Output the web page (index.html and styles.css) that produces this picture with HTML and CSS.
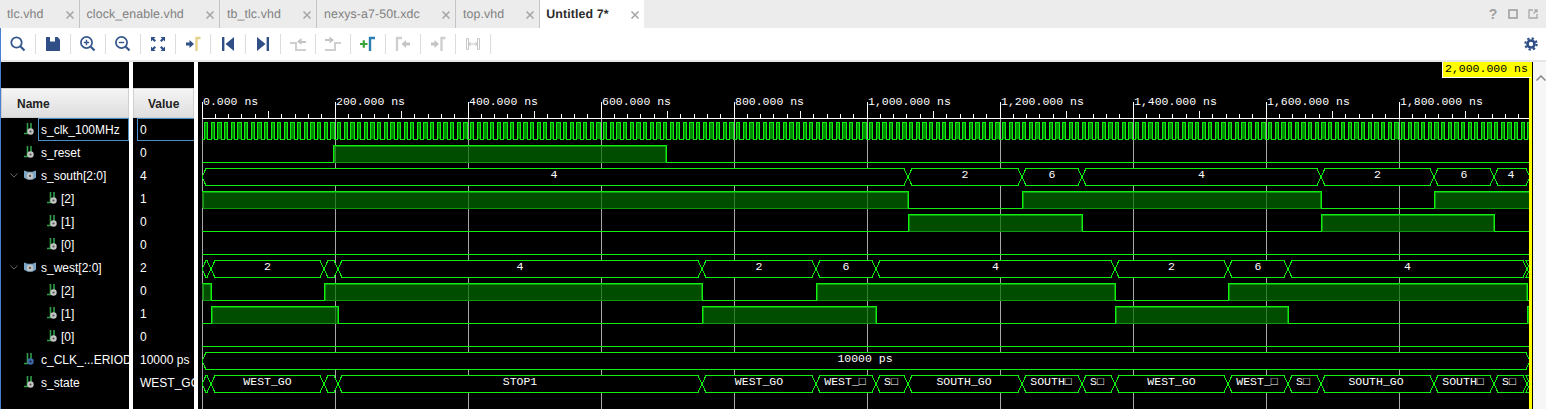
FILE: index.html
```html
<!DOCTYPE html>
<html lang="en">
<head>
  <meta charset="UTF-8">
  <title>Untitled 7</title>
  <link rel="stylesheet" href="styles.css">
</head>
<body>
  <svg class="defs" width="0" height="0">
    <symbol id="bit" viewBox="0 0 12 15">
      <path d="M0 11.500h3.500V1M7 1v6" fill="none" stroke="#2f9e4a" stroke-width="1.600"/>
      <circle cx="6.500" cy="9.500" r="3.200" fill="#c4c4c4"/>
      <circle cx="6.500" cy="9.500" r="1.100" fill="#555"/>
    </symbol>
    <symbol id="const" viewBox="0 0 12 15">
      <path d="M0 11.500h3.500V1M7 1v6" fill="none" stroke="#2f9e4a" stroke-width="1.600"/>
      <circle cx="6.500" cy="9.500" r="3.200" fill="#3f6aa8"/>
      <circle cx="6.500" cy="9.500" r="1.100" fill="#16233f"/>
    </symbol>
    <symbol id="bus" viewBox="0 0 13 13">
      <path d="M0 1l4 1.500h5l4-1.500v8l-4 2h-5l-4-2z" fill="#7ba6c4"/>
      <circle cx="6.500" cy="7" r="3.500" fill="#c4c4c4"/>
      <circle cx="6.500" cy="7" r="1.200" fill="#555"/>
    </symbol>
    <symbol id="close" viewBox="0 0 8 8">
      <path d="M.5.500l7 7M7.500.500l-7 7" stroke="#a4a4a4" stroke-width="1.500" fill="none"/>
    </symbol>
  </svg>

  <div class="app">
    <div class="tabbar">
      <div class="tab"><span>tlc.vhd</span><svg class="close"><use href="#close"/></svg></div>
      <div class="tab"><span>clock_enable.vhd</span><svg class="close"><use href="#close"/></svg></div>
      <div class="tab"><span>tb_tlc.vhd</span><svg class="close"><use href="#close"/></svg></div>
      <div class="tab"><span>nexys-a7-50t.xdc</span><svg class="close"><use href="#close"/></svg></div>
      <div class="tab"><span>top.vhd</span><svg class="close"><use href="#close"/></svg></div>
      <div class="tab active"><span>Untitled 7*</span><svg class="close"><use href="#close"/></svg></div>
      <div class="tab-actions">
        <span class="help">?</span>
        <svg width="10" height="10" viewBox="0 0 10 10"><rect x="1" y="1" width="8" height="8" fill="none" stroke="#a0a0a0" stroke-width="1.600"/></svg>
        <svg width="10" height="10" viewBox="0 0 10 10"><path d="M5 1H1v8h8V5M5.500 4.500L9 1M6.500 1H9v2.500" fill="none" stroke="#a8a8a8" stroke-width="1.300"/></svg>
      </div>
    </div>

    <div class="toolbar">
      <div class="tool"><svg viewBox="0 0 18 18"><circle cx="7.500" cy="7.500" r="5.200" fill="none" stroke="#35578c" stroke-width="1.800"/><path d="M11.500 11.500l4 4" stroke="#35578c" stroke-width="2.200"/></svg></div>
      <div class="tool"><svg viewBox="0 0 18 18"><path d="M2 2h11.500L16 4.500V16H2z" fill="#2f4f86"/><rect x="6" y="2" width="5" height="4.500" fill="#fff"/></svg></div>
      <div class="tool"><svg viewBox="0 0 18 18"><circle cx="7.500" cy="7.500" r="5.600" fill="none" stroke="#35578c" stroke-width="1.700"/><path d="M4.800 7.500h5.400M7.500 4.800v5.400" stroke="#35578c" stroke-width="1.400"/><path d="M11.800 11.800l3.700 3.700" stroke="#35578c" stroke-width="2.200"/></svg></div>
      <div class="tool"><svg viewBox="0 0 18 18"><circle cx="7.500" cy="7.500" r="5.600" fill="none" stroke="#35578c" stroke-width="1.700"/><path d="M4.800 7.500h5.400" stroke="#35578c" stroke-width="1.400"/><path d="M11.800 11.800l3.700 3.700" stroke="#35578c" stroke-width="2.200"/></svg></div>
      <div class="tool"><svg viewBox="0 0 18 18"><path d="M2 2h4.500L5 3.500 7 5.500 5.500 7l-2-2L2 6.500zM16 2v4.500L14.500 5l-2 2L11 5.500l2-2L11.500 2zM2 16v-4.500L3.500 13l2-2L7 12.500l-2 2L6.500 16zM16 16h-4.500L13 14.500l-2-2 1.500-1.500 2 2 1.500-1.500z" fill="#2f4f86"/></svg></div>
      <div class="tool"><svg viewBox="0 0 18 18"><path d="M2 7.500h3.500V5L10 9l-4.500 4v-2.500H2z" fill="#2f4f86"/><path d="M12.500 16V3h4" fill="none" stroke="#e6d28c" stroke-width="2.400"/></svg></div>
      <div class="tool"><svg viewBox="0 0 18 18"><path d="M3 2h2.400v14H3zM15 2v14L6.500 9z" fill="#2f4f86"/></svg></div>
      <div class="tool"><svg viewBox="0 0 18 18"><path d="M12.600 2H15v14h-2.400zM3 2v14l8.500-7z" fill="#2f4f86"/></svg></div>
      <div class="tool"><svg viewBox="0 0 18 18"><path d="M1 8h6v7h10" fill="none" stroke="#cfcfcf" stroke-width="2"/><path d="M17 6h-4.500V3L8 6.500l4.500 3.500V8H17z" fill="#c4c4c4"/></svg></div>
      <div class="tool"><svg viewBox="0 0 18 18"><path d="M1 15h10V8h6" fill="none" stroke="#cfcfcf" stroke-width="2"/><path d="M1 4h4.500V1.500L10 5l-4.500 3.500V6H1z" fill="#c4c4c4"/></svg></div>
      <div class="tool"><svg viewBox="0 0 18 18"><path d="M1 9h7.500M4.800 5.200v7.600" stroke="#3aa53a" stroke-width="2.200"/><path d="M11 16V3h5" fill="none" stroke="#2b7fb0" stroke-width="2.400"/></svg></div>
      <div class="tool"><svg viewBox="0 0 18 18"><path d="M3 16V3h5" fill="none" stroke="#cfcfcf" stroke-width="2.400"/><path d="M16 7.500h-4V5L7.500 9l4.500 4v-2.500h4z" fill="#c4c4c4"/></svg></div>
      <div class="tool"><svg viewBox="0 0 18 18"><path d="M2 7.500h3.500V5L10 9l-4.500 4v-2.500H2z" fill="#c4c4c4"/><path d="M12.500 16V3h4" fill="none" stroke="#cfcfcf" stroke-width="2.400"/></svg></div>
      <div class="tool"><svg viewBox="0 0 18 18"><path d="M2.500 3.500h2v11h-2zM13.500 3.500h2v11h-2z" fill="#fff" stroke="#c8c8c8"/><path d="M5 9h8M6.500 7L5 9l1.500 2M11.500 7L13 9l-1.500 2" fill="none" stroke="#c4c4c4"/></svg></div>
      <svg class="gear" viewBox="0 0 16 16"><circle cx="8" cy="8" r="4" fill="none" stroke="#2f4f86" stroke-width="3"/><circle cx="8" cy="8" r="6.500" fill="none" stroke="#2f4f86" stroke-width="2.400" stroke-dasharray="2.600 2.500"/></svg>
    </div>

    <div class="strip"></div>

    <div class="main">
      <div class="panel names">
        <div class="head">Name</div>
        <div class="row selected"><svg class="ic"><use href="#bit"/></svg><span>s_clk_100MHz</span></div>
        <div class="row"><svg class="ic"><use href="#bit"/></svg><span>s_reset</span></div>
        <div class="row"><svg class="chev" viewBox="0 0 10 6"><path d="M.5.500L5 5 9.500.500" fill="none" stroke="#808080"/></svg><svg class="ic ic-bus"><use href="#bus"/></svg><span>s_south[2:0]</span></div>
        <div class="row child"><svg class="ic"><use href="#bit"/></svg><span>[2]</span></div>
        <div class="row child"><svg class="ic"><use href="#bit"/></svg><span>[1]</span></div>
        <div class="row child"><svg class="ic"><use href="#bit"/></svg><span>[0]</span></div>
        <div class="row"><svg class="chev" viewBox="0 0 10 6"><path d="M.5.500L5 5 9.500.500" fill="none" stroke="#808080"/></svg><svg class="ic ic-bus"><use href="#bus"/></svg><span>s_west[2:0]</span></div>
        <div class="row child"><svg class="ic"><use href="#bit"/></svg><span>[2]</span></div>
        <div class="row child"><svg class="ic"><use href="#bit"/></svg><span>[1]</span></div>
        <div class="row child"><svg class="ic"><use href="#bit"/></svg><span>[0]</span></div>
        <div class="row"><svg class="ic"><use href="#const"/></svg><span>c_CLK_...ERIOD</span></div>
        <div class="row"><svg class="ic"><use href="#bit"/></svg><span>s_state</span></div>
      </div>

      <div class="panel values">
        <div class="head">Value</div>
        <div class="row selected"><span>0</span></div>
        <div class="row"><span>0</span></div>
        <div class="row"><span>4</span></div>
        <div class="row"><span>1</span></div>
        <div class="row"><span>0</span></div>
        <div class="row"><span>0</span></div>
        <div class="row"><span>2</span></div>
        <div class="row"><span>0</span></div>
        <div class="row"><span>1</span></div>
        <div class="row"><span>0</span></div>
        <div class="row"><span>10000 ps</span></div>
        <div class="row"><span>WEST_GO</span></div>
      </div>

      <div class="waves">
        <svg id="plot" class="plot" viewBox="198 62 1335 347" width="1335" height="347"></svg>
        <div class="marker">2,000.000 ns</div>
      </div>

      <div class="scrollbar">
        <svg width="10" height="6" viewBox="0 0 10 6"><path d="M.5 5.500L5 1l4.500 4.500" fill="none" stroke="#888" stroke-width="1.500"/></svg>
      </div>
    </div>
  </div>

  <script src="script.js"></script>
</body>
</html>
```

FILE: styles.css
```css
body {
  margin: 0;
  background: #fff;
  font-family: "Liberation Sans", Arial, sans-serif;
  overflow: hidden;
}

.defs {
  display: block;
}

.app {
  display: flex;
  flex-direction: column;
  height: 409px;
  border-left: 1px solid #4a7fd0;
}

.tabbar {
  display: flex;
  height: 28px;
  margin-left: -1px;
  background: #ececec;
}

.tab {
  display: flex;
  align-items: center;
  gap: 22px;
  padding: 0 5px 0 7px;
  border-right: 1px solid #c4c4c4;
  font-size: 12.4px;
  letter-spacing: 0.1px;
  text-rendering: geometricPrecision;
  color: #808080;
}

.tab.active {
  background: #fff;
  border-right: none;
  padding-left: 6px;
  font-weight: bold;
  color: #2b2b2b;
}

.close {
  width: 8px;
  height: 8px;
  margin-top: 2px;
}

.tab-actions {
  display: flex;
  align-items: center;
  gap: 10px;
  margin-left: auto;
  padding-right: 8px;
}

.help {
  width: 10px;
  font-size: 14px;
  font-weight: bold;
  text-align: center;
  color: #a0a0a0;
}

.toolbar {
  display: flex;
  align-items: center;
  height: 32px;
}

.tool {
  display: flex;
  justify-content: center;
  align-items: center;
  box-sizing: border-box;
  width: 35px;
  height: 20px;
  border-right: 1px solid #dcdcdc;
}

.tool svg {
  width: 18px;
  height: 18px;
}

.gear {
  width: 14px;
  height: 14px;
  margin-left: auto;
  margin-right: 8px;
}

.strip {
  height: 2px;
  background: #e6e6e6;
}

.main {
  display: flex;
  flex: 1;
  min-height: 0;
}

.panel {
  padding-top: 26px;
  background: #000;
  color: #fff;
  font-size: 12px;
  overflow: hidden;
  white-space: nowrap;
}

.names {
  width: 128px;
  margin-right: 4px;
}

.values {
  width: 61px;
  margin-right: 4px;
}

.head {
  box-sizing: border-box;
  height: 30px;
  line-height: 30px;
  background: linear-gradient(#f4f4f4, #dedede);
  border: 1px solid #cfcfcf;
  font-weight: bold;
  color: #222;
}

.names .head {
  padding-left: 15px;
}

.values .head {
  padding-left: 14px;
}

.row {
  display: flex;
  align-items: center;
  box-sizing: border-box;
  height: 23px;
  position: relative;
}

.names .row {
  padding-left: 23px;
}

.names .row.child {
  padding-left: 46px;
}

.values .row {
  padding-left: 7px;
}

.row.selected::after {
  content: "";
  position: absolute;
  top: 0;
  bottom: 0;
  right: 0;
  border: 1px solid #4a90c8;
}

.names .row.selected::after {
  left: 37px;
}

.values .row.selected::after {
  left: 4px;
  right: -2px;
}

.ic {
  flex: none;
  width: 12px;
  height: 15px;
  margin-right: 5px;
}

.child .ic {
  margin-right: 2px;
}

.ic-bus {
  height: 13px;
}

.chev {
  position: absolute;
  left: 9px;
  top: 9px;
  width: 8px;
  height: 5px;
}

.waves {
  position: relative;
  width: 1335px;
  background: #000;
}

.plot {
  display: block;
}

.marker {
  position: absolute;
  top: 0;
  left: 1244px;
  box-sizing: border-box;
  width: 89px;
  height: 16px;
  padding-left: 2px;
  background: #ff0;
  border-left: 1px solid #fff;
  border-bottom: 1px solid #fff;
  font: 11.5px/14px "Liberation Mono", monospace;
  color: #000;
}

.scrollbar {
  flex: 1;
  padding: 5px 0 0 3px;
  background: #f6f6f6;
}

.grid {
  stroke: #a8a8a8;
  shape-rendering: crispEdges;
}

.axis {
  stroke: #fff;
  shape-rendering: crispEdges;
}

.axis-label,
.wave-label {
  font-family: "Liberation Mono", monospace;
  font-size: 11.5px;
  fill: #fff;
}

.wave-label {
  text-anchor: middle;
}

.high {
  fill: rgba(0, 110, 0, 0.7);
  shape-rendering: crispEdges;
}

.high-clk {
  fill: #008a00;
  shape-rendering: crispEdges;
}

.inner {
  fill: none;
  stroke: #0c9a0c;
  shape-rendering: crispEdges;
}

.line {
  fill: none;
  stroke: #10f010;
  shape-rendering: crispEdges;
}

.bus {
  fill: #000;
  stroke: #10f010;
  shape-rendering: crispEdges;
}

.cursor {
  fill: #ff0;
  shape-rendering: crispEdges;
}
```

FILE: script.js
```js
const NS = "http://www.w3.org/2000/svg";
const plot = document.getElementById("plot");

const X0 = 202;
const XEND = 1530;
const MAJOR = 133;

function add(tag, attrs, text) {
  const el = document.createElementNS(NS, tag);
  for (const k in attrs) el.setAttribute(k, attrs[k]);
  if (text) el.textContent = text;
  plot.appendChild(el);
}

function rowTop(i) {
  return 122 + i * 23;
}

function drawAxis() {
  for (let k = 0; k < 100; k++) {
    const x = Math.floor(X0 + k * 13.3) + 0.5;
    const len = k % 10 === 0 ? 16 : k % 5 === 0 ? 7 : 4;
    add("line", { class: "axis", x1: x, x2: x, y1: 118 - len, y2: 118 });
  }
  add("line", { class: "axis", x1: X0, x2: XEND, y1: 118.5, y2: 118.5 });

  const labels = ["0.000 ns", "200.000 ns", "400.000 ns", "600.000 ns", "800.000 ns", "1,000.000 ns",
    "1,200.000 ns", "1,400.000 ns", "1,600.000 ns", "1,800.000 ns"];
  labels.forEach((label, k) => {
    const x = X0 + k * MAJOR;
    add("line", { class: "grid", x1: x + 0.5, x2: x + 0.5, y1: 119, y2: 409 });
    add("text", { class: "axis-label", x: x + 1, y: 105 }, label);
  });
}

// edges are the x positions where the bit toggles, starting from startHigh
function drawBit(row, edges, startHigh, isClock) {
  const top = rowTop(row);
  const low = top + 17;
  const xs = [X0, ...edges, XEND];
  let high = startHigh;
  let d = "M" + xs[0] + " " + ((high ? top : low) + 0.5);

  for (let i = 0; i < xs.length - 1; i++) {
    const a = xs[i];
    const b = xs[i + 1];
    if (high) {
      add("rect", { class: isClock ? "high-clk" : "high", x: a, y: top, width: b - a, height: 17 });
      if (!isClock && b - a > 2) {
        add("path", { class: "inner", d: `M${a + 1.5} ${low + 0.5}V${top + 1.5}H${b - 0.5}V${low + 0.5}H${a + 1}` });
      }
    }
    d += `H${b + 0.5}`;
    if (i < xs.length - 2) d += `V${(high ? low : top) + 0.5}`;
    high = !high;
  }
  add("path", { class: "line", d: d });
}

function drawBus(row, segs) {
  const top = rowTop(row) + 0.5;
  const low = top + 17;
  const mid = top + 8.5;
  segs.forEach((seg) => {
    const [a, b] = seg;
    add("path", { class: "bus", d: `M${a} ${mid}L${a + 4} ${top}H${b - 4}L${b} ${mid}L${b - 4} ${low}H${a + 4}Z` });
  });
  segs.forEach((seg) => {
    const [a, b, label, cx] = seg;
    if (label) add("text", { class: "wave-label", x: cx || (a + b) / 2, y: rowTop(row) + 10 }, label);
  });
}

const clockEdges = [];
for (let k = 0; k * 6.65 + 204 < XEND; k++) {
  clockEdges.push(Math.round(204 + k * 6.65), Math.round(204 + k * 6.65 + 3.33));
}

drawAxis();
drawBit(0, clockEdges, false, true);
drawBit(1, [333, 666], false);
drawBus(2, [[202, 908, "4", 554], [908, 1022, "2"], [1022, 1082, "6"], [1082, 1321, "4"], [1321, 1434, "2"], [1434, 1494, "6"], [1494, 1530, "4", 1511]]);
drawBit(3, [908, 1022, 1321, 1434], true);
drawBit(4, [908, 1082, 1321, 1494], false);
drawBit(5, [], false);
drawBus(6, [[202, 211], [211, 324, "2"], [324, 338], [338, 702, "4"], [702, 816, "2"], [816, 876, "6"], [876, 1115, "4"], [1115, 1228, "2"], [1228, 1288, "6"], [1288, 1527, "4"], [1527, 1530]]);
drawBit(7, [211, 324, 702, 816, 1115, 1228, 1527], true);
drawBit(8, [211, 338, 702, 876, 1115, 1288, 1527], false);
drawBit(9, [], false);
drawBus(10, [[202, 1530, "10000 ps", 865]]);
drawBus(11, [[202, 211], [211, 324, "WEST_GO"], [324, 338], [338, 702, "STOP1"], [702, 816, "WEST_GO"], [816, 876, "WEST_□", 845], [876, 908, "S□", 891], [908, 1022, "SOUTH_GO", 964], [1022, 1082, "SOUTH□", 1051], [1082, 1115, "S□", 1097], [1115, 1228, "WEST_GO"], [1228, 1288, "WEST_□", 1257], [1288, 1321, "S□", 1303], [1321, 1434, "SOUTH_GO", 1376], [1434, 1494, "SOUTH□", 1463], [1494, 1527, "S□", 1509], [1527, 1530]]);

add("rect", { class: "cursor", x: 1529, y: 62, width: 2.5, height: 347 });
```
